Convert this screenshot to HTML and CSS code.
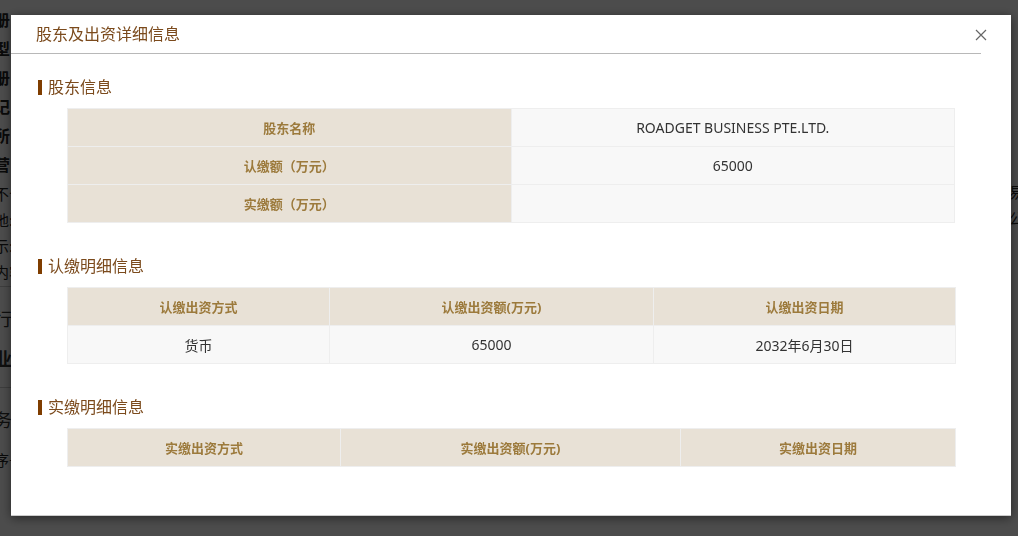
FILE: index.html
```html
<!DOCTYPE html>
<html lang="zh-CN">
<head>
    <meta charset="UTF-8">
    <meta name="viewport" content="width=device-width, initial-scale=1.0">
    <title>股东及出资详细信息</title>
    <link rel="stylesheet" href="styles.css">
</head>
<body>
    <!-- page behind the dialog -->
    <div class="page">
        <div class="page-left">
            <div class="bg-row bold">册</div>
            <div class="bg-row bold">型</div>
            <div class="bg-row bold">册</div>
            <div class="bg-row bold">记</div>
            <div class="bg-row bold">所</div>
            <div class="bg-row bold">营</div>
            <div class="bg-row small">不合</div>
            <div class="bg-row small">地:</div>
            <div class="bg-row small">示:</div>
            <div class="bg-row small">内容</div>
            <div class="bg-sep"></div>
            <div class="bg-row big">行业</div>
            <div class="bg-row big bold">业</div>
            <div class="bg-sep"></div>
            <div class="bg-row big">务</div>
            <div class="bg-row small">序号</div>
        </div>
        <div class="page-right">
            <div class="bg-row small">易</div>
            <div class="bg-row small">公</div>
        </div>
    </div>

    <div class="overlay"></div>

    <div class="modal">
        <div class="modal-head">股东及出资详细信息</div>
        <span class="close">
            <svg width="12" height="12" viewBox="0 0 12 12"><path d="M1 1L11 11M11 1L1 11" stroke="#666" stroke-width="1.2" fill="none"/></svg>
        </span>

        <h3 class="section-title">股东信息</h3>
        <table class="info-table">
            <tr>
                <td class="label">股东名称</td>
                <td class="value">ROADGET BUSINESS PTE.LTD.</td>
            </tr>
            <tr>
                <td class="label">认缴额（万元）</td>
                <td class="value">65000</td>
            </tr>
            <tr>
                <td class="label">实缴额（万元）</td>
                <td class="value"></td>
            </tr>
        </table>

        <h3 class="section-title">认缴明细信息</h3>
        <table class="info-table">
            <colgroup>
                <col style="width: 262px">
                <col style="width: 324px">
                <col style="width: 302px">
            </colgroup>
            <tr>
                <td class="label">认缴出资方式</td>
                <td class="label">认缴出资额(万元)</td>
                <td class="label">认缴出资日期</td>
            </tr>
            <tr>
                <td class="value">货币</td>
                <td class="value">65000</td>
                <td class="value">2032年6月30日</td>
            </tr>
        </table>

        <h3 class="section-title">实缴明细信息</h3>
        <table class="info-table">
            <colgroup>
                <col style="width: 273px">
                <col style="width: 340px">
                <col style="width: 275px">
            </colgroup>
            <tr>
                <td class="label">实缴出资方式</td>
                <td class="label">实缴出资额(万元)</td>
                <td class="label">实缴出资日期</td>
            </tr>
        </table>
    </div>
</body>
</html>
```

FILE: styles.css
```css
body {
    margin: 0;
    font-family: "Noto Sans", "Noto Sans CJK SC", sans-serif;
    background: #fff;
    overflow: hidden;
}
.page {
    display: flex;
    justify-content: space-between;
    height: 536px;
}
.page-left {
    margin-left: -6px;
    padding-top: 8px;
}
.page-right {
    margin-right: -6px;
    padding-top: 180px;
}
.page-right .bg-row {
    height: 53px;
}
.bg-row {
    height: 29px;
    font-size: 16px;
    color: #222;
    line-height: 24px;
}
.bg-row.bold {
    font-weight: bold;
}
.bg-row.small {
    height: 26px;
    font-size: 15px;
}
.bg-row.big {
    height: 40px;
    font-size: 18px;
    color: #333;
}
.bg-sep {
    height: 20px;
    border-top: 1px solid #ccc;
}
.overlay {
    position: fixed;
    left: 0;
    top: 0;
    right: 0;
    bottom: 0;
    background: rgba(0, 0, 0, 0.7);
}
.modal {
    position: fixed;
    left: 11px;
    top: 15px;
    width: 1000px;
    height: 501px;
    background: #fff;
    box-shadow: 0 2px 10px rgba(0, 0, 0, 0.5);
    border-bottom: 1px solid #ccc;
    box-sizing: border-box;
}
.modal-head {
    height: 38px;
    line-height: 38px;
    margin-right: 30px;
    padding-left: 25px;
    font-size: 16px;
    color: #7b4a1c;
    border-bottom: 1px solid #b8b8b8;
}
.close {
    position: absolute;
    right: 24px;
    top: 14px;
    width: 12px;
    height: 12px;
    cursor: pointer;
}
.close svg {
    display: block;
}
.section-title {
    margin: 26px 0 13px 27px;
    padding-left: 6px;
    border-left: 4px solid #7f3d00;
    height: 15px;
    line-height: 15px;
    font-size: 16px;
    font-weight: normal;
    color: #7b4a1c;
}
.info-table + .section-title {
    margin-top: 36px;
}
.info-table {
    width: 888px;
    margin: 0 56px;
    border-collapse: collapse;
    table-layout: fixed;
}
.info-table td {
    height: 37px;
    padding: 0;
    text-align: center;
    border: 1px solid #eeeeee;
}
.label {
    background: #e8e1d6;
    color: #9c7a3c;
    font-size: 13px;
    font-weight: bold;
}
.value {
    background: #f8f8f8;
    color: #333;
    font-size: 14px;
}
```
